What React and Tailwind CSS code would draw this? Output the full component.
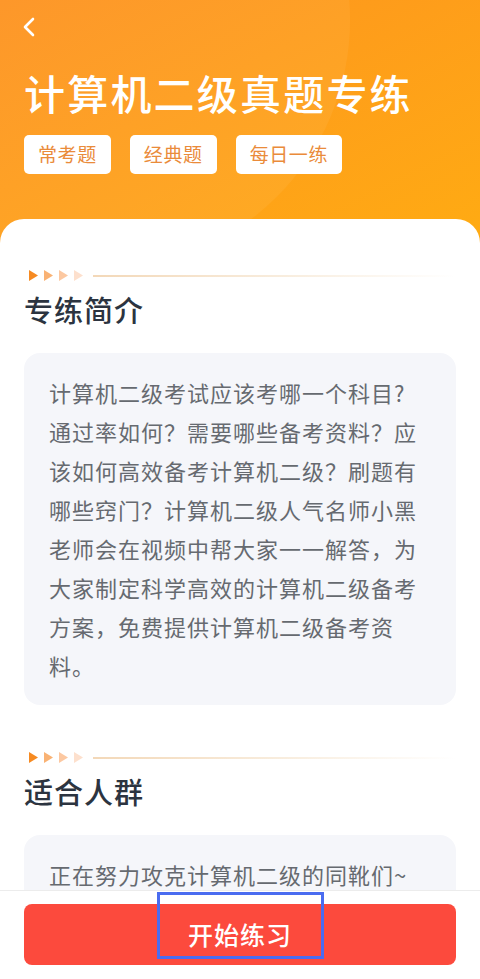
import React from "react";

const FONT = { fontFamily: '"Noto Sans CJK SC", "Noto Sans", sans-serif' };

export default function App() {
  return (
    <div className="relative h-[979px] w-[480px] overflow-hidden bg-white" style={FONT}>
      {/* Header */}
      <div className="relative overflow-hidden bg-gradient-to-br from-[#fd921f] to-[#ffab12] px-6 pt-[17px] pb-[69px]">
        <div className="absolute -left-[150px] -top-[230px] h-[500px] w-[500px] rounded-full bg-white/[0.05]" />
        <svg className="relative ml-[-2px]" width="14" height="20" viewBox="0 0 14 20" fill="none">
          <path d="M11 2 L3 10 L11 18" stroke="white" strokeWidth="2.6" strokeLinecap="round" strokeLinejoin="round" />
        </svg>
        <h1 className="relative mt-[30px] text-[41px] leading-[50px] font-medium tracking-[2.2px] text-white">
          计算机二级真题专练
        </h1>
        <div className="relative mt-[18px] flex gap-[19px]">
          <Tag label="常考题" />
          <Tag label="经典题" />
          <Tag label="每日一练" />
        </div>
      </div>

      {/* Content card */}
      <div className="relative -mt-[24px] rounded-t-[24px] bg-white px-6 pt-[51px]">
        <Section title="专练简介">
          计算机二级考试应该考哪一个科目?通过率如何？需要哪些备考资料？应该如何高效备考计算机二级？刷题有哪些窍门？计算机二级人气名师小黑老师会在视频中帮大家一一解答，为大家制定科学高效的计算机二级备考方案，免费提供计算机二级备考资料。
        </Section>
        <div className="h-[47px]" />
        <Section title="适合人群">正在努力攻克计算机二级的同靴们~</Section>
      </div>

      {/* Bottom bar */}
      <div className="absolute bottom-0 left-0 right-0 border-t border-[#ececec] bg-white px-6 pt-[13px] pb-[14px]">
        <button className="flex h-[61px] w-full items-center justify-center rounded-[8px] bg-[#fc4a3d] text-[25px] font-medium tracking-[1px] text-white">
          开始练习
        </button>
        <div className="pointer-events-none absolute left-[157px] top-[1px] h-[67px] w-[167px] border-[3px] border-[#4a6cf0]" />
      </div>
    </div>
  );
}

function Tag({ label }) {
  return (
    <div className="flex h-[39px] items-center rounded-[5px] bg-white px-[14px] text-[19px] tracking-[0.6px] text-[#ea8b3a]">
      {label}
    </div>
  );
}

function Section({ title, children }) {
  return (
    <div>
      <div className="flex items-center pl-[5px]">
        <Tri color="#f68a22" />
        <Tri color="#f9b274" />
        <Tri color="#fcc8a1" />
        <Tri color="#fde0cd" />
        <div className="ml-[4px] h-[2px] flex-1 bg-gradient-to-r from-[#f3d8b8] via-[#f8ecdc] to-transparent" />
      </div>
      <h2 className="mt-[8px] text-[29px] leading-[40px] font-medium tracking-[1px] text-[#2c3440]">{title}</h2>
      <div className="mt-[24px] rounded-[16px] bg-[#f5f6fa] py-[20px] pl-[25px] pr-[38px] text-[22px] leading-[39px] tracking-[1px] text-[#666a70]">
        {children}
      </div>
    </div>
  );
}

function Tri({ color }) {
  return (
    <svg className="mr-[6px]" width="9" height="11" viewBox="0 0 9 11">
      <path d="M0 0 L9 5.5 L0 11 Z" fill={color} />
    </svg>
  );
}
